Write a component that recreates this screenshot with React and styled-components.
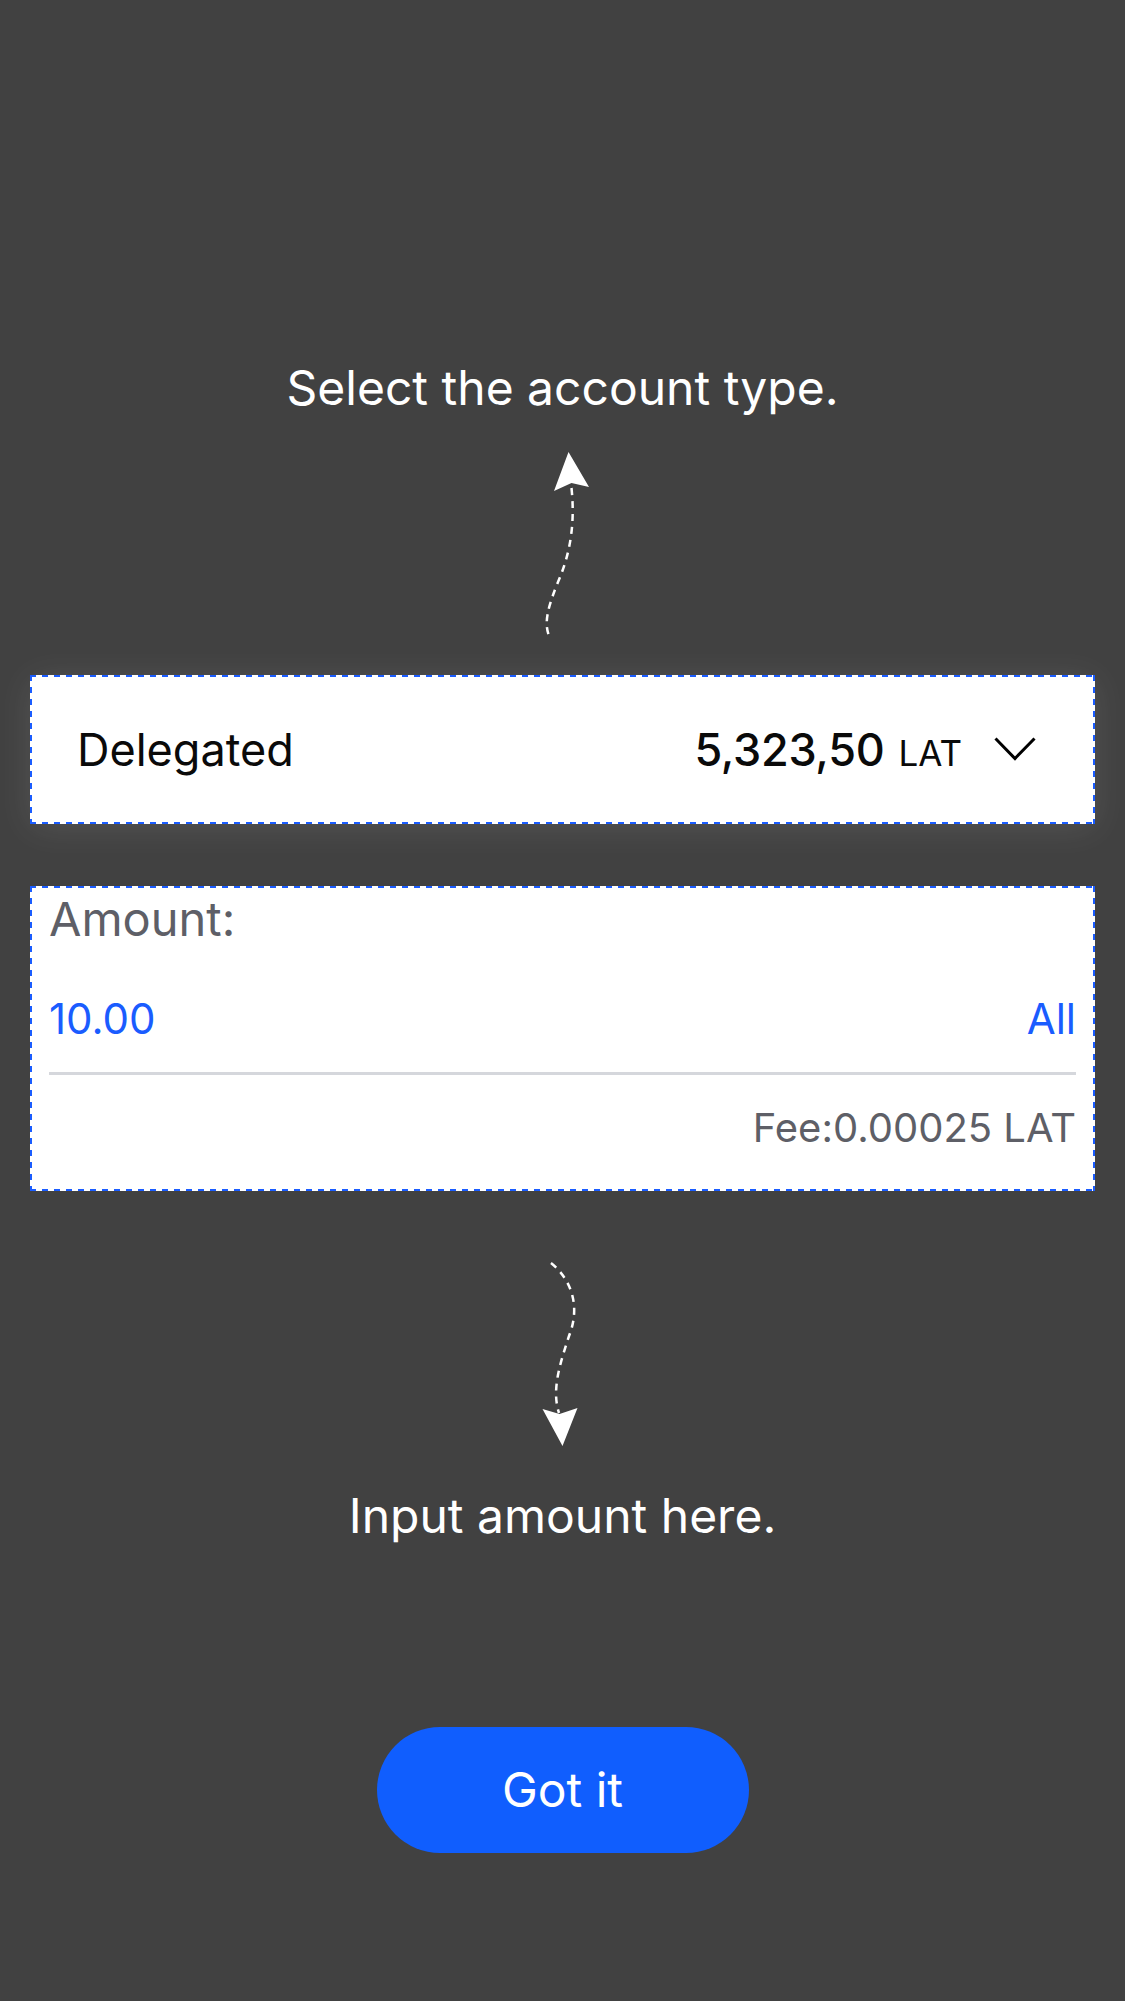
import React from "react";
import styled, { createGlobalStyle } from "styled-components";

const Global = createGlobalStyle`
  html, body { margin: 0; padding: 0; background: #414141; }
  body { font-family: Inter, "Noto Sans", "Liberation Sans", sans-serif; }
  * { box-sizing: border-box; }
`;

const Page = styled.div`
  width: 1125px;
  min-height: 2001px;
  background: #414141;
  display: flex;
  flex-direction: column;
  align-items: center;
  padding: 359px 30px 0;
`;

const Hint = styled.div`
  color: #ffffff;
  font-size: 48px;
  line-height: 1.2;
  font-weight: 400;
  text-align: center;
  margin-top: ${(p) => p.$mt || 0}px;
`;

const Arrow = styled.svg`
  display: block;
  width: 80px;
  height: ${(p) => p.$h}px;
  margin-top: ${(p) => p.$mt}px;
  overflow: visible;
`;

const dash = "#1a5cff";

const Card = styled.div`
  width: 100%;
  padding: 2px;
  margin-top: ${(p) => p.$mt}px;
  background:
    linear-gradient(90deg, ${dash} 50%, transparent 50%) left top / 12px 2px repeat-x,
    linear-gradient(90deg, ${dash} 50%, transparent 50%) left bottom / 12px 2px repeat-x,
    linear-gradient(180deg, ${dash} 50%, transparent 50%) left top / 2px 12px repeat-y,
    linear-gradient(180deg, ${dash} 50%, transparent 50%) right top / 2px 12px repeat-y,
    #ffffff;
  box-shadow: ${(p) => (p.$glow ? "0 4px 34px rgba(255,255,255,0.1)" : "none")};
`;

const SelectRow = styled.div`
  height: 145px;
  display: flex;
  align-items: center;
  justify-content: space-between;
  padding: 0 57px 0 45px;
`;

const AccountName = styled.span`
  font-size: 45px;
  color: #0a0a0a;
`;

const Balance = styled.div`
  display: flex;
  align-items: baseline;
`;

const BalanceNum = styled.span`
  font-size: 45px;
  font-weight: 500;
  letter-spacing: -0.3px;
  color: #0a0a0a;
`;

const Unit = styled.span`
  font-size: 35px;
  color: #0a0a0a;
  margin-left: 14px;
`;

const Chevron = styled.svg`
  width: 42px;
  height: 24px;
  margin-left: 32px;
  align-self: center;
`;

const AmountBody = styled.div`
  padding: 3px 17px 37px;
  display: flex;
  flex-direction: column;
`;

const Label = styled.div`
  font-size: 47px;
  line-height: 1.2;
  color: #5e5f67;
`;

const InputRow = styled.div`
  display: flex;
  justify-content: space-between;
  align-items: baseline;
  margin-top: 47px;
  padding-bottom: 28px;
  border-bottom: 3px solid #d5d7dc;
`;

const BlueText = styled.span`
  font-size: 42px;
  line-height: 1.2;
  color: #1a5cff;
`;

const Fee = styled.div`
  font-size: 40px;
  line-height: 1.2;
  color: #5e5f67;
  text-align: right;
  margin-top: 29px;
`;

const Button = styled.button`
  margin-top: 182px;
  width: 372px;
  height: 126px;
  border: none;
  border-radius: 63px;
  background: #105efe;
  color: #ffffff;
  font-family: inherit;
  font-size: 48px;
  font-weight: 400;
  cursor: pointer;
`;

export default function App() {
  return (
    <>
      <Global />
      <Page>
        <Hint>Select the account type.</Hint>
        <Arrow $h={188} $mt={35} viewBox="0 0 80 188">
          <path
            d="M48.5 36 C 52 70, 48 100, 35 130 C 25 155, 20 172, 27 186"
            fill="none"
            stroke="#fff"
            strokeWidth="2.5"
            strokeDasharray="7 6"
          />
          <polygon points="45.5,0 66,35 48.5,31 31,39" fill="#fff" />
        </Arrow>
        <Card $mt={35} $glow>
          <SelectRow>
            <AccountName>Delegated</AccountName>
            <Balance>
              <BalanceNum>5,323,50</BalanceNum>
              <Unit>LAT</Unit>
              <Chevron viewBox="0 0 42 24">
                <polyline
                  points="1.5,1.5 21,21.5 40.5,1.5"
                  fill="none"
                  stroke="#000"
                  strokeWidth="3"
                />
              </Chevron>
            </Balance>
          </SelectRow>
        </Card>
        <Card $mt={62}>
          <AmountBody>
            <Label>Amount:</Label>
            <InputRow>
              <BlueText>10.00</BlueText>
              <BlueText>All</BlueText>
            </InputRow>
            <Fee>Fee:0.00025 LAT</Fee>
          </AmountBody>
        </Card>
        <Arrow $h={186} $mt={70} viewBox="0 0 80 186">
          <path
            d="M28 2 C 48 18, 58 45, 46 75 C 38 100, 28 128, 36 152"
            fill="none"
            stroke="#fff"
            strokeWidth="2.5"
            strokeDasharray="7 6"
          />
          <polygon points="19.5,148 36.5,153 54.5,147 39.5,185" fill="#fff" />
        </Arrow>
        <Hint $mt={40}>Input amount here.</Hint>
        <Button>Got it</Button>
      </Page>
    </>
  );
}
